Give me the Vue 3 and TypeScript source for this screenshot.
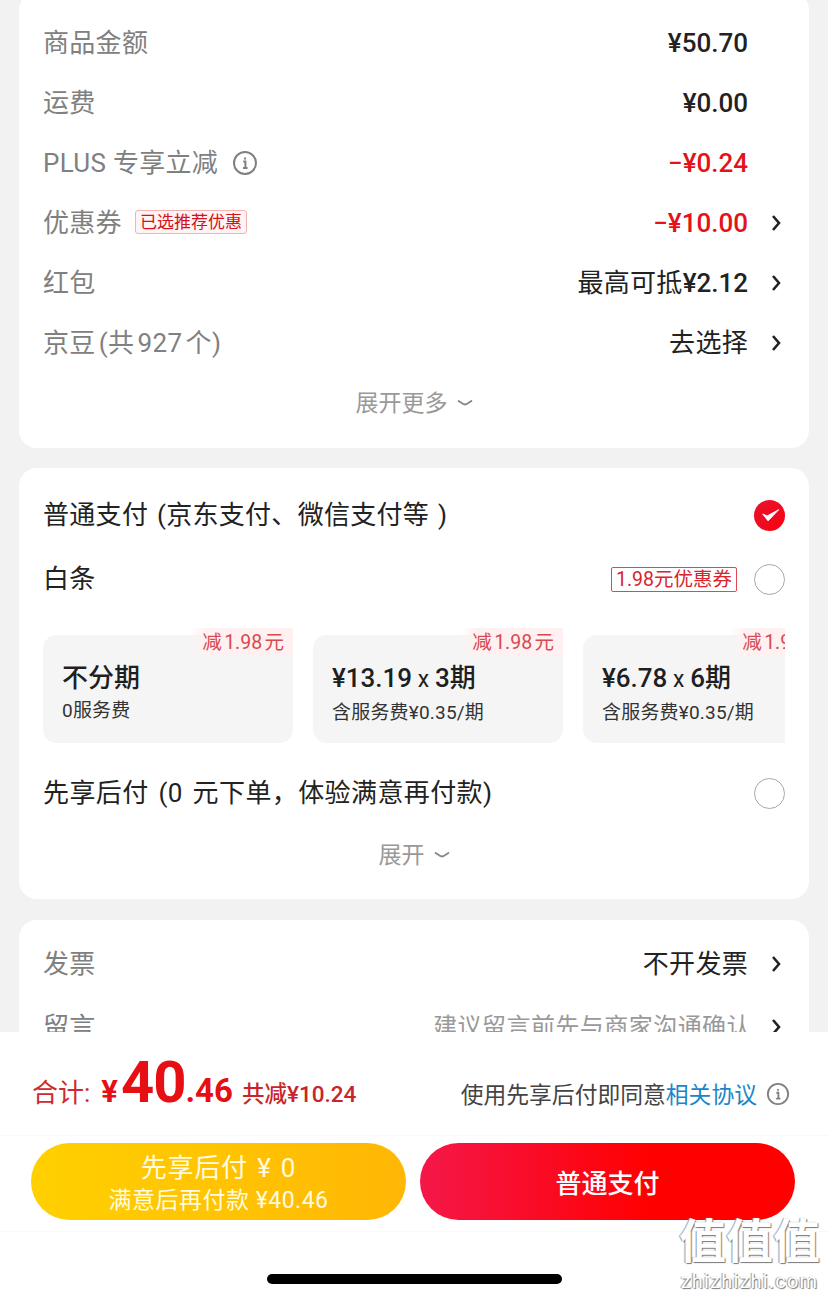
<script setup lang="ts">
interface Tile { title: string; times?: string; sub: string }
const tiles: Tile[] = [
  { title: '不分期', sub: '0服务费' },
  { title: '¥13.19', times: '3期', sub: '含服务费¥0.35/期' },
  { title: '¥6.78', times: '6期', sub: '含服务费¥0.35/期' },
]
</script>

<template>
  <div class="page">
    <div class="scroll">
      <section class="card first">
        <div class="row"><span class="label">商品金额</span><span class="val end">¥50.70</span></div>
        <div class="row"><span class="label">运费</span><span class="val end">¥0.00</span></div>
        <div class="row">
          <span class="label">PLUS 专享立减</span>
          <svg class="info" viewBox="0 0 26 26"><circle cx="13" cy="13" r="11" /><path d="M13 7.6v1.8M11.2 11.6H13.4V18M11 18h4.6" /></svg>
          <span class="val red end">−¥0.24</span>
        </div>
        <div class="row">
          <span class="label">优惠券</span>
          <span class="tag">已选推荐优惠</span>
          <span class="val red">−¥10.00</span>
          <svg class="chev" viewBox="0 0 10 18"><path d="M2 2l6 7-6 7" /></svg>
        </div>
        <div class="row">
          <span class="label">红包</span>
          <span class="val mixed"><span class="cjk">最高可抵</span>¥2.12</span>
          <svg class="chev" viewBox="0 0 10 18"><path d="M2 2l6 7-6 7" /></svg>
        </div>
        <div class="row">
          <span class="label bean">京豆 (共 927 个)</span>
          <span class="val mixed"><span class="cjk">去选择</span></span>
          <svg class="chev" viewBox="0 0 10 18"><path d="M2 2l6 7-6 7" /></svg>
        </div>
        <div class="more">展开更多<svg viewBox="0 0 16 8"><path d="M1 1.5c3 2 5 4 7 4s4-2 7-4" /></svg></div>
      </section>

      <section class="card second">
        <div class="pay first-pay">
          <span class="pay-name">普通支付 (京东支付、微信支付等 )</span>
          <svg class="check" viewBox="0 0 32 32">
            <defs><linearGradient id="chk" x1="0" y1="0" x2="1" y2="1"><stop offset="0" stop-color="#e8142c" /><stop offset="1" stop-color="#fa0011" /></linearGradient></defs>
            <circle cx="16" cy="16" r="16" fill="url(#chk)" />
            <path d="M9 14.5l4.5 2L25.5 10l-11 11.5z" fill="#fff" stroke="#fff" stroke-width="1" stroke-linejoin="round" />
          </svg>
        </div>
        <div class="pay second-pay">
          <span class="pay-name">白条</span>
          <span class="coupon">1.98元优惠券</span>
          <span class="radio"></span>
        </div>
        <div class="tiles">
          <div v-for="t in tiles" :key="t.title" class="tile">
            <span class="off">减 1.98 元</span>
            <div class="tile-title">{{ t.title }}<template v-if="t.times"><span class="x"> x </span>{{ t.times }}</template></div>
            <div class="tile-sub">{{ t.sub }}</div>
          </div>
        </div>
        <div class="pay third-pay">
          <span class="pay-name narrow">先享后付 (0 元下单，体验满意再付款)</span>
          <span class="radio"></span>
        </div>
        <div class="more short">展开<svg viewBox="0 0 16 8"><path d="M1 1.5c3 2 5 4 7 4s4-2 7-4" /></svg></div>
      </section>

      <section class="card third">
        <div class="row"><span class="label">发票</span><span class="val mixed"><span class="cjk">不开发票</span></span><svg class="chev" viewBox="0 0 10 18"><path d="M2 2l6 7-6 7" /></svg></div>
        <div class="row lower"><span class="label">留言</span><span class="val hint">建议留言前先与商家沟通确认</span><svg class="chev" viewBox="0 0 10 18"><path d="M2 2l6 7-6 7" /></svg></div>
      </section>
    </div>

    <footer class="footer">
      <div class="summary">
        <div class="total">
          <span class="t-label">合计:</span>
          <span class="t-yen">¥</span><span class="t-big">40</span><span class="t-small">.46</span>
          <span class="t-save">共减¥10.24</span>
        </div>
        <div class="agree">
          使用先享后付即同意<span class="link">相关协议</span>
          <svg class="info small" viewBox="0 0 26 26"><circle cx="13" cy="13" r="11" /><path d="M13 7.6v1.8M11.2 11.6H13.4V18M11 18h4.6" /></svg>
        </div>
      </div>
      <div class="buttons">
        <button class="btn later">
          <span class="l1">先享后付 ¥ 0</span>
          <span class="l2">满意后再付款 ¥40.46</span>
        </button>
        <button class="btn now">普通支付</button>
      </div>
      <div class="home"><span class="bar"></span></div>
      <div class="mark" aria-hidden="true">
        <span class="m1">值值值</span>
        <span class="m2">zhizhizhi.com</span>
      </div>
    </footer>
  </div>
</template>

<style scoped>
.page {
  position: relative;
  width: 828px;
  height: 1299px;
  overflow: hidden;
  display: flex;
  flex-direction: column;
  background: #f2f2f2;
  font-family: "Roboto", "Noto Sans CJK SC", sans-serif;
  color: #1a1a1a;
}
.scroll {
  flex: none;
  height: 1032px;
  overflow: hidden;
  display: flex;
  flex-direction: column;
  padding: 0 19px;
  box-sizing: border-box;
}
.card {
  flex: none;
  background: #fff;
  border-radius: 18px;
  padding: 0 24px;
}
.first { margin-top: -8px; padding-top: 21px; padding-bottom: 15px; }
.second { margin-top: 20px; padding-top: 16px; height: 431px; box-sizing: border-box; }
.third { margin-top: 21px; padding-top: 14px; height: 200px; box-sizing: border-box; }
.row {
  height: 60px;
  display: flex;
  align-items: center;
  gap: 14px;
}
.row.lower { margin-top: 3px; }
.label { font-size: 26px; color: #808080; letter-spacing: 0.3px; padding-bottom: 6px; }
.label.bean { word-spacing: -3.5px; }
.val { margin-left: auto; font-size: 26px; font-weight: 500; color: #222; }
.val.mixed { padding-bottom: 6px; }
.cjk { font-weight: 400; letter-spacing: 0.3px; }
.val.end { margin-right: 37px; }
.val.red { color: #e31319; }
.val.hint { font-size: 24px; font-weight: 400; color: #999; letter-spacing: 0.45px; padding-bottom: 6px; margin-right: -3px; }
.info { width: 26px; height: 26px; margin-left: 0; flex: none; }
.info circle, .info path { fill: none; stroke: #808080; stroke-width: 2; }
.info.small { width: 24px; height: 24px; margin-left: 9px; }
.tag {
  font-size: 17px;
  line-height: 22px;
  padding: 0 4px;
  color: #d4121a;
  background: #fff4f3;
  border: 1px solid #f0b5b0;
  border-radius: 3px;
  margin-left: -1px;
  margin-bottom: 2px;
}
.chev { width: 10px; height: 18px; flex: none; margin: 0 4px 0 9px; }
.chev path { fill: none; stroke: #222; stroke-width: 2.6; }
.more {
  height: 60px;
  display: flex;
  align-items: center;
  justify-content: center;
  gap: 9px;
  font-size: 23px;
  color: #999;
  padding-bottom: 4px;
  box-sizing: border-box;
}
.more svg { width: 16px; height: 8px; margin-top: 4px; }
.more path { fill: none; stroke: #888; stroke-width: 1.8; }
.pay { display: flex; align-items: center; height: 62px; }
.pay-name { font-size: 26px; color: #222; letter-spacing: 0.3px; word-spacing: 2px; padding-bottom: 6px; }
.pay-name.narrow { letter-spacing: 0.4px; word-spacing: 3px; }
.check { width: 31px; height: 31px; margin-left: auto; flex: none; }
.radio {
  width: 31px;
  height: 31px;
  box-sizing: border-box;
  border: 1.5px solid #a8a8a8;
  border-radius: 50%;
  flex: none;
  margin-left: auto;
}
.second-pay { height: 66px; }
.second-pay .radio { margin-left: 17px; }
.coupon {
  margin-left: auto;
  font-size: 19.5px;
  line-height: 23px;
  padding: 0 4px;
  color: #d8242c;
  border: 1px solid #e0484f;
  border-radius: 2px;
}
.tiles {
  display: flex;
  gap: 20px;
  overflow: hidden;
  margin-top: 16px;
  padding-top: 7px;
}
.tile {
  position: relative;
  flex: none;
  width: 250px;
  height: 108px;
  box-sizing: border-box;
  padding: 26px 19px 0;
  background: #f5f5f6;
  border-radius: 14px;
}
.off {
  position: absolute;
  top: -7px;
  right: 0;
  height: 28px;
  padding: 0 9px 4px 12px;
  box-sizing: border-box;
  display: flex;
  align-items: center;
  font-size: 19.5px;
  word-spacing: -2.5px;
  color: #d84a50;
  white-space: nowrap;
  background: linear-gradient(90deg, rgba(255, 236, 236, 0), #fff1f1 16%, #fff1f1);
}
.tile-title { font-size: 26px; font-weight: 500; line-height: 34px; color: #1f1f1f; white-space: nowrap; }
.x { font-size: 23px; font-weight: 400; }
.tile-sub { font-size: 19px; line-height: 26px; margin-top: 3px; color: #333; white-space: nowrap; letter-spacing: 0.2px; }
.third-pay { height: 60px; margin-top: 20px; }
.short { margin-top: 2px; }
.footer {
  flex: none;
  height: 267px;
  background: #fff;
  display: flex;
  flex-direction: column;
}
.summary {
  height: 104px;
  flex: none;
  box-sizing: border-box;
  display: flex;
  align-items: center;
  justify-content: space-between;
  padding: 20px 38px 0 32px;
  border-bottom: 1px solid #f9f9f9;
}
.total { display: flex; align-items: baseline; color: #dd1a22; white-space: nowrap; margin-bottom: 20px; }
.t-label { font-size: 26px; color: #cc2a30; margin-right: 11px; }
.t-yen { font-size: 31px; font-weight: 700; color: #e60f14; }
.t-big { font-size: 58px; line-height: 50px; font-weight: 700; color: #e60f14; margin-left: 3px; letter-spacing: -1px; }
.t-small { font-size: 33px; font-weight: 700; color: #e60f14; }
.t-save { font-size: 22.5px; font-weight: 500; color: #c8242a; margin-left: 9px; }
.agree { display: flex; align-items: center; font-size: 22.8px; color: #444; white-space: nowrap; }
.link { color: #1a86c8; }
.buttons {
  height: 96px;
  flex: none;
  box-sizing: border-box;
  display: flex;
  gap: 14px;
  padding: 7px 33px 11px 31px;
  border-bottom: 1px solid #f9f9f9;
}
.btn {
  flex: 1;
  border: 0;
  border-radius: 39px;
  font-family: inherit;
  color: #fff;
  padding: 0;
  display: flex;
  flex-direction: column;
  align-items: center;
  justify-content: center;
}
.later { background: linear-gradient(90deg, #ffd000, #ffb705); color: #fffbe0; padding-top: 4px; }
.now { background: linear-gradient(90deg, #f5174a, #ff0000 62%); font-size: 26px; font-weight: 500; }
.l1 { font-size: 26px; line-height: 34px; letter-spacing: 0.8px; word-spacing: 2px; }
.l2 { font-size: 23px; line-height: 32px; letter-spacing: 0.5px; }
.home { flex: 1; display: flex; justify-content: center; padding-top: 42px; }
.bar { width: 295px; height: 10px; background: #000; border-radius: 5px; }
.mark {
  position: absolute;
  right: 8px;
  bottom: 6px;
  display: flex;
  flex-direction: column;
  align-items: center;
  color: #fff;
  text-shadow: 1px 1px 1px #777, -1px 0 1px #999;
  line-height: 1;
}
.m1 { font-size: 47px; line-height: 50px; font-weight: 700; }
.m2 { font-size: 20px; line-height: 24px; margin-top: 2px; letter-spacing: 1.2px; }
</style>
